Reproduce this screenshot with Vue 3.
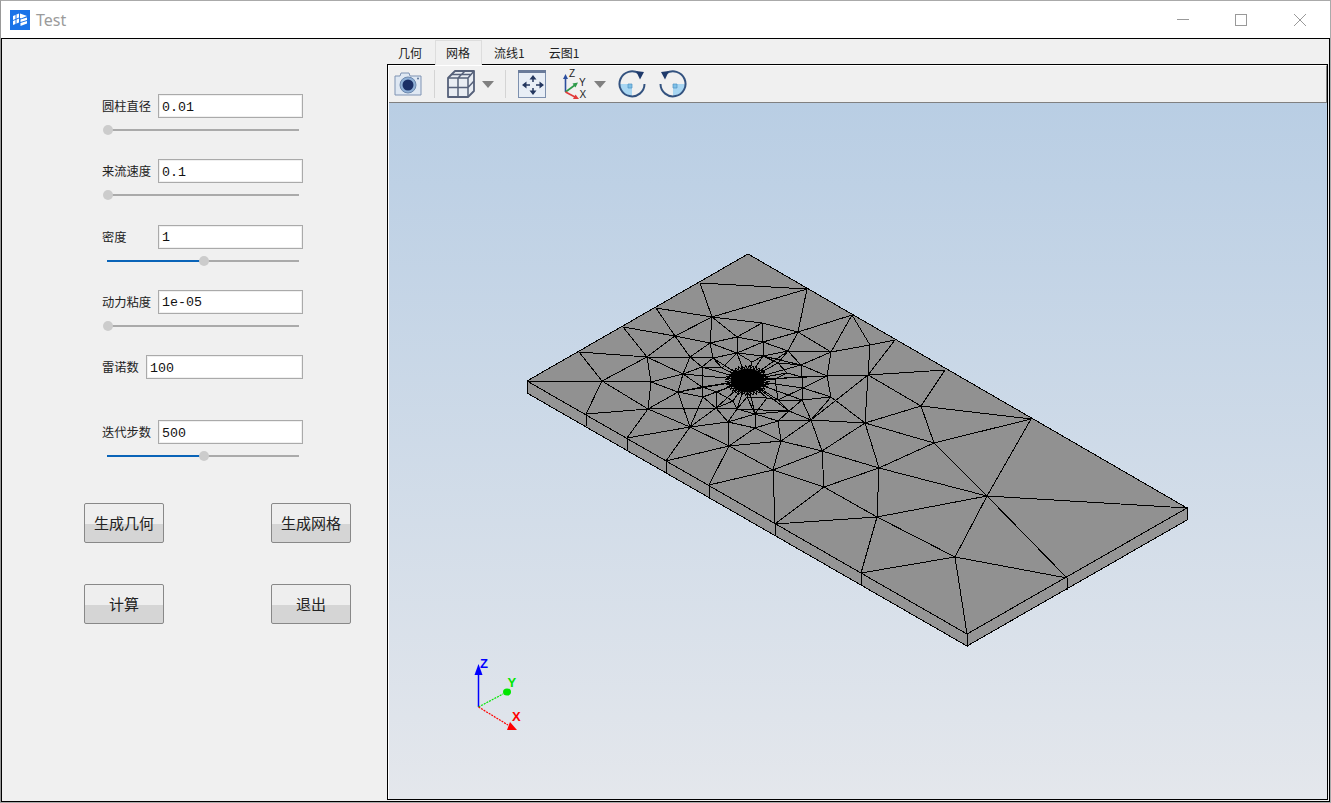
<template>
  <div class="window">
    <header class="titlebar">
      <svg class="logo" width="20" height="20" viewBox="0 0 20 20">
        <rect width="20" height="20" fill="#1a73e8" />
        <path d="M3 6 L9 3.500 V7.500 L3 10 Z M3 11 L9 8.500 V12.500 L3 15 Z" fill="#fff" />
        <path d="M10 3.500 L17 6 L11 8.500 L10 8 Z M10.500 9.500 L17 7.500 V10 L10.500 12 Z M10.500 13 L17 11 V13.500 L10.500 16 Z" fill="#fff" />
        <path d="M6 4.500 V14" stroke="#1a73e8" stroke-width="1" />
      </svg>
      <span class="title">Test</span>
      <div class="win-buttons">
        <svg width="14" height="14" viewBox="0 0 14 14"><path d="M1 6.500 H13" stroke="#999" /></svg>
        <svg class="win-max" width="14" height="14" viewBox="0 0 14 14"><rect x="1.500" y="1.500" width="11" height="11" fill="none" stroke="#999" /></svg>
        <svg width="14" height="14" viewBox="0 0 14 14"><path d="M1 1 L13 13 M13 1 L1 13" stroke="#999" /></svg>
      </div>
    </header>

    <div class="frame">
      <aside class="panel">
        <div class="form">
          <div v-for="f in fields" :key="f.label" class="field">
            <div class="row">
              <label :style="{ width: f.labelWidth + 'px' }">{{ f.label }}</label>
              <input type="text" :value="f.value" />
            </div>
            <div v-if="f.pos !== null" class="slider">
              <div class="track"></div>
              <div class="fill" :style="{ width: f.pos * 100 + '%' }"></div>
              <div class="knob" :style="{ left: f.pos * 100 + '%' }"></div>
            </div>
          </div>
        </div>
        <div class="actions">
          <button v-for="b in buttons" :key="b">{{ b }}</button>
        </div>
      </aside>

      <main class="work">
        <nav class="tabs">
          <div v-for="t in tabs" :key="t" class="tab" :class="{ active: t === '网格' }">{{ t }}</div>
        </nav>
        <section class="pane">
          <div class="toolbar">
            <!-- camera -->
            <svg class="ic-camera" width="28" height="26" viewBox="0 0 28 26">
              <path d="M1 5 H6 L7 2 H15 L16 5 H27 V24 H1 Z" fill="#dfe8f3" stroke="#7f93b3" stroke-linejoin="round" />
              <circle cx="14" cy="14" r="8" fill="#8fb0d6" stroke="#6d88ad" />
              <circle cx="14" cy="14" r="5.500" fill="#1b2f66" />
              <circle cx="24" cy="7.500" r="1" fill="#5b7396" />
            </svg>
            <span class="sep sep1"></span>
            <!-- cube -->
            <svg class="ic-cube" width="28" height="28" viewBox="0 0 28 28">
              <path d="M1 8 L8 1 H27 V21 L21 27 H1 Z" fill="#e9edf3" stroke="#56617a" stroke-width="1.800" stroke-linejoin="round" />
              <path d="M1 8 H21 V27 M21 8 L27 1 M1 17.500 H21 M11 8 V27 M11 8 L18 1 M5 4.500 H24 M21 17.500 L27 11" fill="none" stroke="#56617a" stroke-width="1.500" />
            </svg>
            <span class="drop drop1"></span>
            <span class="sep sep2"></span>
            <!-- fit view -->
            <svg class="ic-fit" width="28" height="28" viewBox="0 0 28 28">
              <rect x="0.500" y="0.500" width="27" height="27" fill="#e8eef6" stroke="#7d90ae" />
              <rect x="0" y="0" width="28" height="3" fill="#6a7b9a" />
              <path d="M15 8 V12 M15 18 V23 M7 15 H12 M18 15 H23" stroke="#24375f" stroke-width="1.500" />
              <path d="M15 5 L11.500 9.500 H18.500 Z M15 25 L11.500 20.500 H18.500 Z M4 15 L8.500 11.500 V18.500 Z M26 15 L21.500 11.500 V18.500 Z" fill="#24375f" />
            </svg>
            <!-- axes -->
            <svg class="ic-axes" width="29" height="30" viewBox="0 0 29 30">
              <path d="M2.500 23 V8" stroke="#2c4f9e" stroke-width="1.600" />
              <path d="M2.500 5 L0 10 H5 Z" fill="#2c4f9e" />
              <path d="M2.500 23 L12 16" stroke="#2d9a4a" stroke-width="1.600" />
              <path d="M15 13.500 L9.500 14.500 L12.500 18.500 Z" fill="#2d9a4a" />
              <path d="M2.500 23 L12 28" stroke="#e23a3a" stroke-width="1.600" />
              <path d="M16 30 L10 30 L12.500 25.500 Z" fill="#e23a3a" />
              <text x="6" y="8" class="axis-label">Z</text>
              <text x="16" y="17" class="axis-label">Y</text>
              <text x="16.500" y="29" class="axis-label">X</text>
            </svg>
            <span class="drop drop2"></span>
            <!-- rotate cw / ccw -->
            <svg class="ic-rot1" width="28" height="28" viewBox="0 0 28 28">
              <path d="M14 14 H1.500 A12.500 12.500 0 0 0 14 26.500 Z" fill="#a8d6f2" />
              <path d="M14 14 H10 V18 H14 Z" fill="#7fc0e6" stroke="#4f93c4" stroke-width="0.700" />
              <path d="M21 3.500 A12.500 12.500 0 1 0 26.500 14" fill="none" stroke="#33527f" stroke-width="2" />
              <path d="M18 1 L26 2 L22 9.500 Z" fill="#1f3a6b" />
            </svg>
            <svg class="ic-rot2" width="28" height="28" viewBox="0 0 28 28">
              <path d="M14 14 H26.500 A12.500 12.500 0 0 1 14 26.500 Z" fill="#a8d6f2" />
              <path d="M14 14 H18 V18 H14 Z" fill="#7fc0e6" stroke="#4f93c4" stroke-width="0.700" />
              <path d="M7 3.500 A12.500 12.500 0 1 1 1.500 14" fill="none" stroke="#33527f" stroke-width="2" />
              <path d="M10 1 L2 2 L6 9.500 Z" fill="#1f3a6b" />
            </svg>
          </div>

          <div class="viewport">
            <!-- viewBox uses window coordinates so the mesh nodes read directly -->
            <svg class="scene" viewBox="389 103 938 695" width="938" height="695">
              <g shape-rendering="crispEdges" stroke="#000" stroke-width="1">
                <polygon :points="poly([L, B, down(B), down(L)])" fill="#959595" />
                <polygon :points="poly([B, R, down(R), down(B)])" fill="#959595" />
                <polygon :points="poly([T, R, B, L])" fill="#919191" />
                <line v-for="(p, i) in ticks" :key="'t' + i" :x1="p[0]" :y1="p[1]" :x2="p[0]" :y2="p[1] + 12" />
                <line v-for="(e, i) in edges" :key="i" :x1="e[0][0]" :y1="e[0][1]" :x2="e[1][0]" :y2="e[1][1]" />
                <line v-for="(e, i) in fineLines" :key="'f' + i" :x1="e[0]" :y1="e[1]" :x2="e[2]" :y2="e[3]" />
              </g>
              <ellipse cx="747.500" cy="380.500" rx="17" ry="12" fill="#000" />

              <g class="triad">
                <path d="M478.500 707 V673" stroke="#0000ff" stroke-width="1.500" fill="none" />
                <path d="M478.500 664 L474.500 675 H482.500 Z" fill="#0000ff" />
                <path d="M478.500 707 L503 694" stroke="#00e600" stroke-width="1.200" stroke-dasharray="2 1" />
                <ellipse cx="507" cy="692" rx="4" ry="3.500" fill="#00e600" />
                <path d="M478.500 707 L508 725" stroke="#ff0000" stroke-width="1.200" stroke-dasharray="2 1" />
                <path d="M510 722 L517 730 H507 Z" fill="#ff0000" />
                <text x="480" y="668" fill="#0000ff">Z</text>
                <text x="507.500" y="687" fill="#00e600">Y</text>
                <text x="512" y="721" fill="#ff0000">X</text>
              </g>
            </svg>
          </div>
        </section>
      </main>
    </div>
  </div>
</template>

<script setup>
const fields = [
  { label: "圆柱直径", value: "0.01", labelWidth: 56, pos: 0 },
  { label: "来流速度", value: "0.1", labelWidth: 56, pos: 0 },
  { label: "密度", value: "1", labelWidth: 56, pos: 0.515 },
  { label: "动力粘度", value: "1e-05", labelWidth: 56, pos: 0 },
  { label: "雷诺数", value: "100", labelWidth: 44, pos: null },
  { label: "迭代步数", value: "500", labelWidth: 56, pos: 0.515 },
];
const buttons = ["生成几何", "生成网格", "计算", "退出"];
const tabs = ["几何", "网格", "流线1", "云图1"];

// plate corners
const T = [748, 254];
const L = [527, 381];
const R = [1187, 508];
const B = [967, 634];
const down = (p) => [p[0], p[1] + 12];
const poly = (pts) => pts.map((p) => p.join(",")).join(" ");

// mesh nodes, read off the picture
const N = {
  T, L, R, B,
  a1: [700, 283], a2: [656, 308], a3: [623, 327], a4: [579, 352],
  b1: [807, 289], b2: [852, 315], b3: [895, 340], b4: [945, 370], b5: [1031, 419],
  c1: [586, 414], c2: [627, 438], c3: [666, 461], c4: [709, 485], c5: [775, 524], c6: [861, 573],
  d1: [1067, 578],
  n1: [712, 317], n2: [762, 323], n3: [798, 332], n4: [675, 336], n5: [647, 357], n6: [602, 381],
  n7: [651, 382], n8: [648, 409], n9: [678, 392], n10: [690, 427], n11: [729, 446], n12: [716, 408],
  n13: [728, 422], n14: [755, 428], n15: [781, 441], n16: [773, 470], n17: [822, 451], n18: [824, 487],
  n19: [811, 420], n20: [778, 421], n21: [755, 414], n22: [737, 409], n23: [831, 397], n24: [803, 388],
  n25: [827, 376], n26: [831, 352], n27: [737, 337], n28: [710, 343], n29: [763, 342], n30: [737, 353],
  n31: [763, 356], n32: [788, 351], n33: [690, 357], n34: [713, 358], n35: [683, 374], n36: [802, 400],
  i1: [722, 368], i2: [752, 362], i3: [778, 363], i4: [702, 367], i5: [801, 365], i6: [787, 373],
  i7: [802, 377], i8: [775, 379], i9: [702, 387], i10: [717, 392], i12: [778, 400], i13: [703, 397],
  i14: [733, 401], i15: [747, 397], i16: [767, 398], m0: [789, 411],
  m1: [868, 375], m2: [870, 345],
  f1: [865, 423], f2: [879, 468], f3: [877, 517], f4: [934, 443], f5: [921, 406], f6: [987, 496], f7: [955, 557],
  C: [747, 380],
};

const edgeList = `
a1-b1 a1-n1 n1-b1 n1-n2 b1-n3 n2-n3 n3-b2 n2-n27 n2-n29 n3-n29 n3-n32 n3-n26
n1-a2 n1-n4 n1-n27 n1-n28 a2-n4 a3-n4 a3-n5 n4-n5 n4-n33 n4-n28 a4-n5 a4-n6 n5-n6
n5-n7 n5-n33 n5-n35 L-n6 n6-n7 n6-c1 n6-n8 c1-n8 c2-n8 c2-n10 n7-n8 n7-n9 n7-n35
n8-n9 n8-n10 n9-n35 n9-n10 n10-c3 c3-n11 n10-n11 n10-n13 n10-n12 n11-n13 n11-n14
n11-n15 n11-n16 c4-n11 c4-n16 c5-n16 n16-n15 n16-n17 n16-n18 n15-n17 n15-n14 n15-n20
n17-n19 n17-n18 n15-n19 n14-n20 n14-n13 n14-n21 n19-n20 n13-n21 n13-n12 n13-n22 n8-n12
n30-n27 n30-n28 n30-n29 n30-n31 n30-n34 n30-i1 n30-i2 n31-n29 n31-n32 n31-i2 n31-i3
n31-i5 n32-n29 n32-n26 n32-i3 n32-i5 n27-n28 n27-n29 n28-n34 n28-n33 n34-n33 n34-i4 n34-i1
n33-i4 n33-n35 i4-n35 i4-i1 i4-i9 n35-i9 n35-n9 i9-n9 i9-i10 i9-i13 i13-n9 i13-n12 i13-n10
i10-i13 i10-n12 i10-i14 n12-i14 n12-n22 n22-i14 n22-i15 n22-n21 n22-m0 i15-n21 i15-i16 i16-n21
i16-i12 i12-m0 i12-n24 i12-n36 m0-n21 m0-n20 m0-n19 m0-n36 n36-n24 n36-n23 n36-n19 n24-n23
n24-i7 n24-n25 i7-n25 i5-n25 i5-n26 i5-i7 i7-i6 i6-i8 i6-i3 i3-i5 i8-i12 n25-n26 n25-n23
n23-n19 n23-f1 n19-f1 n21-n20
n25-m1 n26-m2 n26-b2 n19-m1 n17-f1 n17-f2 n18-f2 n18-f3 c5-f3 c5-n18 c6-f3 c6-f7
f1-f5 f1-f4 f1-f2 f1-m1 f2-f4 f2-f6 f2-f3 f3-f6 f3-f7 f7-f6 f7-d1 f7-B f6-f4 f6-b5 f6-R f6-d1
f4-f5 f4-b5 f5-b5 f5-b4 f5-m1 m1-b4 m1-m2 m1-b3 m2-b3 m2-b2
i1-C i2-C i3-C i4-C i5-C i6-C i7-C i8-C i9-C i10-C i12-C i13-C i14-C i15-C i16-C
n9-C n24-C n30-C n31-C n22-C n21-C m0-C n12-C n34-C n32-C n35-C n25-C n36-C
`;
const edges = edgeList.trim().split(/\s+/).map((s) => {
  const [a, b] = s.split("-");
  return [N[a], N[b]];
});

const ticks = [L, N.c1, N.c2, N.c3, N.c4, N.c5, N.c6, B, N.d1, R];

// fine halo round the cylinder hole, the mesh is too dense there to read node by node
const fineLines = [];
const cx = 747.5;
const cy = 380.5;
const ring = (rx, k) => [cx + rx * Math.cos(k), cy + rx * 0.7 * Math.sin(k)];
const n = 36;
for (let i = 0; i < n; i++) {
  const a = ring(17, (i / n) * Math.PI * 2);
  const c = ring(22, ((i + 0.5) / n) * Math.PI * 2);
  const b = ring(17, ((i + 1) / n) * Math.PI * 2);
  fineLines.push([a[0], a[1], c[0], c[1]]);
  fineLines.push([b[0], b[1], c[0], c[1]]);
}
</script>

<style scoped>
.window {
  width: 1331px;
  height: 803px;
  box-sizing: border-box;
  border: 1px solid #aaa;
  border-left-color: #999;
  display: flex;
  flex-direction: column;
  background: #fff;
  overflow: hidden;
  font-family: "Noto Sans CJK SC", "Noto Sans", sans-serif;
}

.titlebar {
  height: 37px;
  flex: none;
  display: flex;
  align-items: center;
  padding-left: 9px;
}

.logo {
  margin-top: 1px;
}

.title {
  margin-left: 6px;
  font-family: "Noto Sans", sans-serif;
  font-size: 16px;
  color: #9b9b9b;
}

.win-buttons {
  margin-left: auto;
  margin-right: 23px;
  display: flex;
  gap: 44px;
  margin-top: 1px;
}

.win-buttons svg {
  display: block;
  shape-rendering: crispEdges;
}

.win-buttons svg:last-child {
  shape-rendering: auto;
}

.win-buttons .win-max {
  margin-right: 1px;
}

.frame {
  flex: 1;
  min-height: 0;
  display: flex;
  border: 1px solid #000;
  background: #f0f0f0;
}

.panel {
  width: 385px;
  flex: none;
  box-sizing: border-box;
  padding: 55px 0 0 82px;
}

.form {
  margin-left: 18px;
  display: grid;
  grid-template-columns: 201px;
  grid-auto-rows: 65.25px;
}

.row {
  display: flex;
  align-items: center;
  height: 24px;
}

.row label {
  flex: none;
  font-size: 12.25px;
  color: #222;
  line-height: 24px;
}

.row input {
  flex: 1;
  min-width: 0;
  height: 24px;
  box-sizing: border-box;
  border: 1px solid #aaa;
  box-shadow: inset 0 0 0 1px #f0f0f0;
  background: #fff;
  padding: 2px 3px 0;
  font-family: "Liberation Mono", monospace;
  font-size: 13.3px;
  color: #111;
  outline: none;
}

.slider {
  position: relative;
  height: 10px;
  width: 186px;
  margin: 7px 0 0 1px;
}

.track {
  position: absolute;
  left: 4px;
  top: 4px;
  height: 2px;
  width: 192px;
  background: #aaa;
}

.fill {
  position: absolute;
  left: 4px;
  top: 4px;
  height: 2px;
  background: #0a64b8;
}

.knob {
  position: absolute;
  top: 0;
  width: 10px;
  height: 10px;
  border-radius: 50%;
  background: #ccc;
}

.actions {
  margin-top: 17.5px;
  width: 267px;
  display: grid;
  grid-template-columns: 80px 80px;
  justify-content: space-between;
  row-gap: 41px;
}

.actions button {
  height: 40px;
  padding: 0 0 2px;
  box-sizing: border-box;
  border: 1px solid #888;
  border-radius: 2px;
  background: linear-gradient(#eeeeee 0, #eeeeee 52%, #d5d5d5 52%, #d5d5d5 100%);
  font-family: "Noto Sans CJK SC", sans-serif;
  font-size: 15px;
  color: #222;
}

.work {
  flex: 1;
  min-width: 0;
  display: flex;
  flex-direction: column;
  margin: 1px 1px 1px 0;
}

.tabs {
  height: 24px;
  flex: none;
  display: flex;
  position: relative;
  z-index: 1;
}

.tab {
  padding: 0 12px;
  font-size: 12px;
  line-height: 25px;
  color: #222;
}

.tab:first-child {
  padding: 0 13px 0 11px;
}

.tab.active {
  height: 25px;
  box-sizing: border-box;
  line-height: 24px;
  border: 1px solid #ddd;
  border-bottom: none;
  padding: 0 11px 0 10px;
  background: #f0f0f0;
}

.pane {
  flex: 1;
  min-height: 0;
  display: flex;
  flex-direction: column;
  border: 1px solid #000;
  padding-left: 1px;
  background: #fff;
}

.toolbar {
  height: 38px;
  flex: none;
  box-sizing: border-box;
  display: flex;
  align-items: center;
  background: #f0f0f0;
  border-top: 1px solid #fff;
  border-right: 1px solid #808080;
  border-bottom: 1px solid #808080;
}

.toolbar svg {
  display: block;
  flex: none;
}

.sep {
  width: 1px;
  height: 28px;
  background: #d4d4d4;
  flex: none;
}

.drop {
  flex: none;
  width: 0;
  height: 0;
  border-left: 6px solid transparent;
  border-right: 6px solid transparent;
  border-top: 7px solid #808080;
}

.ic-camera { margin-left: 5px; }
.sep1 { margin-left: 12px; }
.ic-cube { margin-left: 12px; }
.drop1 { margin-left: 7px; }
.sep2 { margin-left: 11px; }
.ic-fit { margin-left: 12px; }
.ic-axes { margin-left: 17px; }
.drop2 { margin-left: 2px; }
.ic-rot1 { margin-left: 12px; }
.ic-rot2 { margin-left: 13px; }

.axis-label {
  font-family: "Liberation Sans", sans-serif;
  font-size: 10px;
  fill: #222;
}

.viewport {
  flex: 1;
  min-height: 0;
  overflow: hidden;
  background: linear-gradient(#b9cee4 0%, #e4e7ec 100%);
}

.scene {
  display: block;
}

.triad text {
  font-family: "Liberation Sans", sans-serif;
  font-size: 13px;
  font-weight: 700;
}
</style>
